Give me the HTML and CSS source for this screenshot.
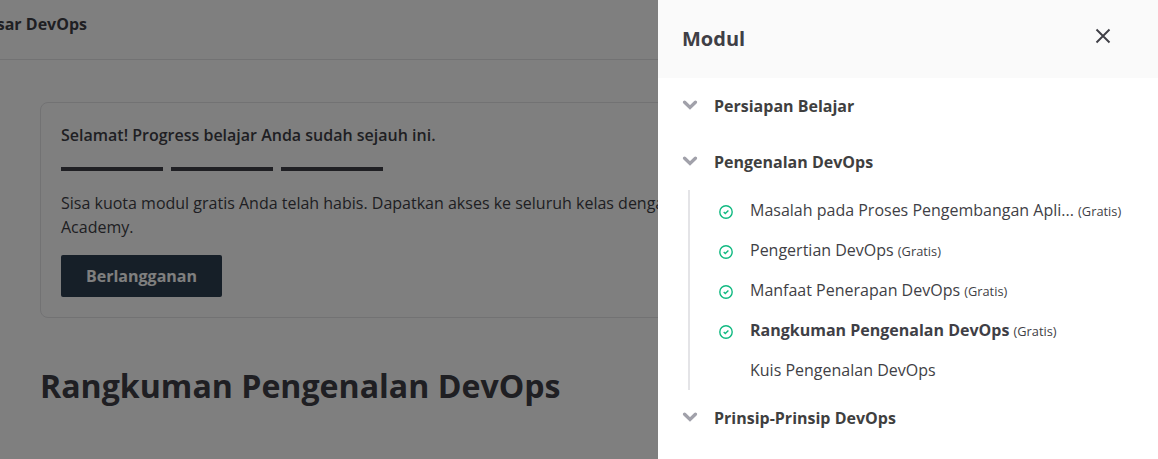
FILE: index.html
```html
<!DOCTYPE html>
<html lang="id">
<head>
<meta charset="utf-8">
<title>Belajar Dasar DevOps</title>
<link rel="stylesheet" href="styles.css">
</head>
<body>
<div class="page">
  <header class="topbar"><span class="course">Belajar Dasar DevOps</span></header>
  <main class="content">
    <section class="card">
      <h2 class="card-title">Selamat! Progress belajar Anda sudah sejauh ini.</h2>
      <div class="progress"><i></i><i></i><i></i></div>
      <p class="card-text">Sisa kuota modul gratis Anda telah habis. Dapatkan akses ke seluruh kelas dengan Dicoding<br>Academy.</p>
      <button class="subscribe">Berlangganan</button>
    </section>
    <h1 class="title">Rangkuman Pengenalan DevOps</h1>
  </main>
</div>
<div class="overlay"></div>
<aside class="drawer">
  <header class="drawer-head">
    <h2 class="drawer-title">Modul</h2>
    <svg class="close" viewBox="0 0 16 16"><path d="M1.5 1.5l13 13M14.5 1.5l-13 13"/></svg>
  </header>
  <nav class="modules">
    <div class="group"><svg class="chevron" viewBox="0 0 16 10"><path d="M2.6 2.2L8 7.4 13.4 2.2"/></svg>Persiapan Belajar</div>
    <div class="group"><svg class="chevron" viewBox="0 0 16 10"><path d="M2.6 2.2L8 7.4 13.4 2.2"/></svg>Pengenalan DevOps</div>
    <ul class="lessons">
      <li><svg class="check" viewBox="0 0 14 14"><circle cx="7" cy="7" r="6.2"/><path d="M4.7 7.1l1.6 1.5 3.1-3"/></svg><span>Masalah pada Proses Pengembangan Apli... <small>(Gratis)</small></span></li>
      <li><svg class="check" viewBox="0 0 14 14"><circle cx="7" cy="7" r="6.2"/><path d="M4.7 7.1l1.6 1.5 3.1-3"/></svg><span>Pengertian DevOps <small>(Gratis)</small></span></li>
      <li><svg class="check" viewBox="0 0 14 14"><circle cx="7" cy="7" r="6.2"/><path d="M4.7 7.1l1.6 1.5 3.1-3"/></svg><span>Manfaat Penerapan DevOps <small>(Gratis)</small></span></li>
      <li><svg class="check" viewBox="0 0 14 14"><circle cx="7" cy="7" r="6.2"/><path d="M4.7 7.1l1.6 1.5 3.1-3"/></svg><span><b>Rangkuman Pengenalan DevOps</b> <small>(Gratis)</small></span></li>
      <li><i class="check"></i><span>Kuis Pengenalan DevOps</span></li>
    </ul>
    <div class="group"><svg class="chevron" viewBox="0 0 16 10"><path d="M2.6 2.2L8 7.4 13.4 2.2"/></svg>Prinsip-Prinsip DevOps</div>
  </nav>
</aside>
</body>
</html>
```
FILE: styles.css
```css
* { box-sizing: border-box; }
body { margin: 0; height: 459px; overflow: hidden; font: 16px/24px "Open Sans", sans-serif; color: #3f3f46; }
h1, h2, p, ul { margin: 0; padding: 0; }
.page { height: 459px; background: #fff; overflow: hidden; }
.topbar { display: flex; align-items: center; height: 60px; padding-bottom: 12px; border-bottom: 1px solid #e4e4e7; }
.course { width: 87px; display: flex; justify-content: flex-end; white-space: nowrap; font-weight: 700; }
.content { padding: 42px 40px 0; }
.card { width: 778px; height: 216px; padding: 20px; border: 1px solid #e4e4e7; border-radius: 8px; }
.card-title { font-size: 16px; line-height: 24px; font-weight: 600; }
.progress { display: flex; gap: 8px; margin: 20px 0; }
.progress i { width: 102px; height: 4px; background: #3f3f46; }
.card-text { white-space: nowrap; }
.subscribe { display: block; width: 161px; height: 42px; margin-top: 16px; border: 0; border-radius: 2px; background: #2d3e50; color: #fff; font: 700 16px/24px "Open Sans", sans-serif; }
.title { margin-top: 44px; font-size: 32.12px; line-height: 48px; font-weight: 700; }
.overlay { position: fixed; inset: 0; background: rgba(0, 0, 0, .5); }
.drawer { position: fixed; top: 0; right: 0; width: 500px; height: 459px; background: #fff; color: #3f3f46; }
.drawer-head { display: flex; justify-content: space-between; align-items: center; height: 78px; padding: 0 47px 0 24px; background: #fafafa; }
.drawer-title { font-size: 20px; line-height: 28px; font-weight: 700; }
.close { width: 16px; height: 16px; margin-bottom: 6px; fill: none; stroke: #3f3f46; stroke-width: 1.9; }
.modules { padding: 0 24px; }
.group { display: flex; align-items: center; gap: 16px; height: 56px; font-weight: 700; color: #3f3f3f; }
.chevron { width: 16px; height: 10px; margin-bottom: 3px; fill: none; stroke: #a1a1aa; stroke-width: 3.3; stroke-linecap: round; }
.lessons { list-style: none; margin-left: 6px; border-left: 2px solid #e4e4e7; }
.lessons li { display: flex; align-items: center; gap: 17px; height: 40px; padding-left: 29px; white-space: nowrap; }
.lessons small { font-size: 12.8px; }
.check { width: 14px; height: 14px; margin-top: 4px; fill: none; stroke: #10b981; stroke-width: 1.4; }
```
